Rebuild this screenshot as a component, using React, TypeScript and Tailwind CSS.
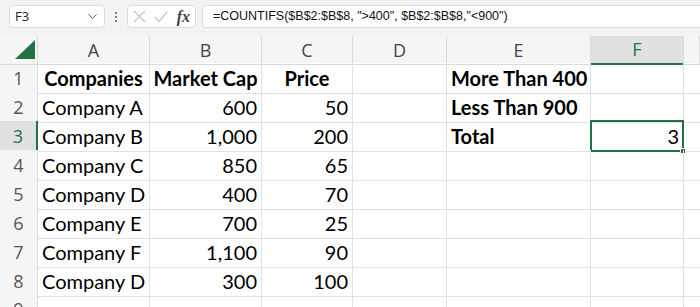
import { ChevronDown } from "lucide-react";

// Column widths measured off the sheet: row header, A..F, and the sliver of G.
const cols = "grid-cols-[38px_112px_112px_91px_94px_144px_93px_16px]";
const cellFont = { fontFamily: "Lato, 'Open Sans', sans-serif" };
const uiFont = { fontFamily: "'Open Sans', 'Noto Sans', sans-serif" };

type Cell = { v?: string; bold?: boolean; align?: "left" | "center" | "right"; active?: boolean };

const rows: Cell[][] = [
  [
    { v: "Companies", bold: true, align: "center" },
    { v: "Market Cap", bold: true, align: "center" },
    { v: "Price", bold: true, align: "center" },
    {},
    { v: "More Than 400", bold: true },
    {},
  ],
  [{ v: "Company A" }, { v: "600", align: "right" }, { v: "50", align: "right" }, {}, { v: "Less Than 900", bold: true }, {}],
  [
    { v: "Company B" },
    { v: "1,000", align: "right" },
    { v: "200", align: "right" },
    {},
    { v: "Total", bold: true },
    { v: "3", align: "right", active: true },
  ],
  [{ v: "Company C" }, { v: "850", align: "right" }, { v: "65", align: "right" }, {}, {}, {}],
  [{ v: "Company D" }, { v: "400", align: "right" }, { v: "70", align: "right" }, {}, {}, {}],
  [{ v: "Company E" }, { v: "700", align: "right" }, { v: "25", align: "right" }, {}, {}, {}],
  [{ v: "Company F" }, { v: "1,100", align: "right" }, { v: "90", align: "right" }, {}, {}, {}],
  [{ v: "Company D" }, { v: "300", align: "right" }, { v: "100", align: "right" }, {}, {}, {}],
  [{}, {}, {}, {}, {}, {}],
];

const alignCls = { left: "justify-start pl-1", center: "justify-center", right: "justify-end pr-1" };

export default function App() {
  return (
    <div className="h-[307px] w-[700px] overflow-hidden bg-white" style={uiFont}>
      {/* formula bar */}
      <div className="flex h-[36px] items-start bg-[#f3f3f3] pt-[5px]">
        <div className="ml-[9px] flex h-[23px] w-[96px] items-center justify-between rounded-[4px] border border-[#dcdcdc] bg-white pl-[5px] pr-[4px] text-[13px] text-[#222]">
          <span>F3</span>
          <ChevronDown size={15} strokeWidth={1.6} className="text-[#555]" />
        </div>
        <div className="flex h-[23px] w-[22px] flex-col items-center justify-center gap-[2px]">
          <span className="h-[2px] w-[2px] rounded-full bg-[#555]" />
          <span className="h-[2px] w-[2px] rounded-full bg-[#555]" />
          <span className="h-[2px] w-[2px] rounded-full bg-[#555]" />
        </div>
        <div className="flex h-[23px] w-[69px] items-center justify-between rounded-[4px] border border-[#dcdcdc] bg-white pl-[5px] pr-[5px]">
          <svg width="13" height="13" viewBox="0 0 13 13" fill="none" stroke="#c4c4c4" strokeWidth="1.2">
            <path d="M1 1 L12 12 M12 1 L1 12" />
          </svg>
          <svg width="14" height="12" viewBox="0 0 14 12" fill="none" stroke="#c4c4c4" strokeWidth="1.2">
            <path d="M1 6 L5 10.5 L13 1" />
          </svg>
          <span className="text-[16px] font-bold italic leading-none text-[#444]" style={{ fontFamily: "'Liberation Serif', serif" }}>
            fx
          </span>
        </div>
        <div
          className="ml-[6px] flex h-[23px] flex-1 items-center rounded-l-[4px] border border-r-0 border-[#dcdcdc] bg-white pl-[10px] text-[12.5px] text-[#111]"
          style={{ fontFamily: "'Liberation Sans', Arial, sans-serif" }}
        >
          =COUNTIFS($B$2:$B$8, "&gt;400", $B$2:$B$8,"&lt;900")
        </div>
      </div>

      {/* column headers */}
      <div className={`grid ${cols} h-[27px] bg-[#f5f5f5]`}>
        <div className="relative border-b border-r border-[#dadada]">
          <svg className="absolute left-[15px] top-[4px]" width="20" height="19" viewBox="0 0 20 19">
            <path d="M20 0 L20 19 L0 19 Z" fill="#217346" />
          </svg>
        </div>
        {["A", "B", "C", "D", "E", "F", ""].map((c) =>
          c === "F" ? (
            <div key={c} className="flex items-center justify-center border-b-2 border-r border-b-[#217346] border-r-[#dadada] bg-[#e1e1e1] text-[18px] text-[#217346]">
              {c}
            </div>
          ) : (
            <div key={c || "g"} className="flex items-center justify-center border-b border-r border-[#dadada] text-[18px] text-[#444]">
              {c}
            </div>
          )
        )}
      </div>

      {/* cells */}
      {rows.map((r, i) => (
        <div key={i} className={`grid ${cols} h-[29px]`}>
          <div
            className={
              i === 2
                ? "flex items-center justify-center border-b border-r-2 border-b-[#dadada] border-r-[#217346] bg-[#e1e1e1] text-[18px] text-[#217346]"
                : "flex items-center justify-center border-b border-r border-[#dadada] bg-[#f5f5f5] text-[18px] text-[#555]"
            }
          >
            {i + 1}
          </div>
          {r.map((c, j) => (
            <div
              key={j}
              className={`relative flex items-center whitespace-nowrap border-b border-r border-[#e1e1e1] text-[20px] text-black ${
                alignCls[c.align ?? "left"]
              } ${c.bold ? "font-bold" : ""}`}
              style={cellFont}
            >
              {c.v}
              {c.active && (
                <>
                  <span className="pointer-events-none absolute -top-px -left-px -right-px -bottom-px border-2 border-[#217346]" />
                  <span className="absolute -bottom-[3px] -right-[3px] h-[6px] w-[6px] border border-white bg-[#217346]" />
                </>
              )}
            </div>
          ))}
          <div className="border-b border-[#e1e1e1]" />
        </div>
      ))}
    </div>
  );
}
